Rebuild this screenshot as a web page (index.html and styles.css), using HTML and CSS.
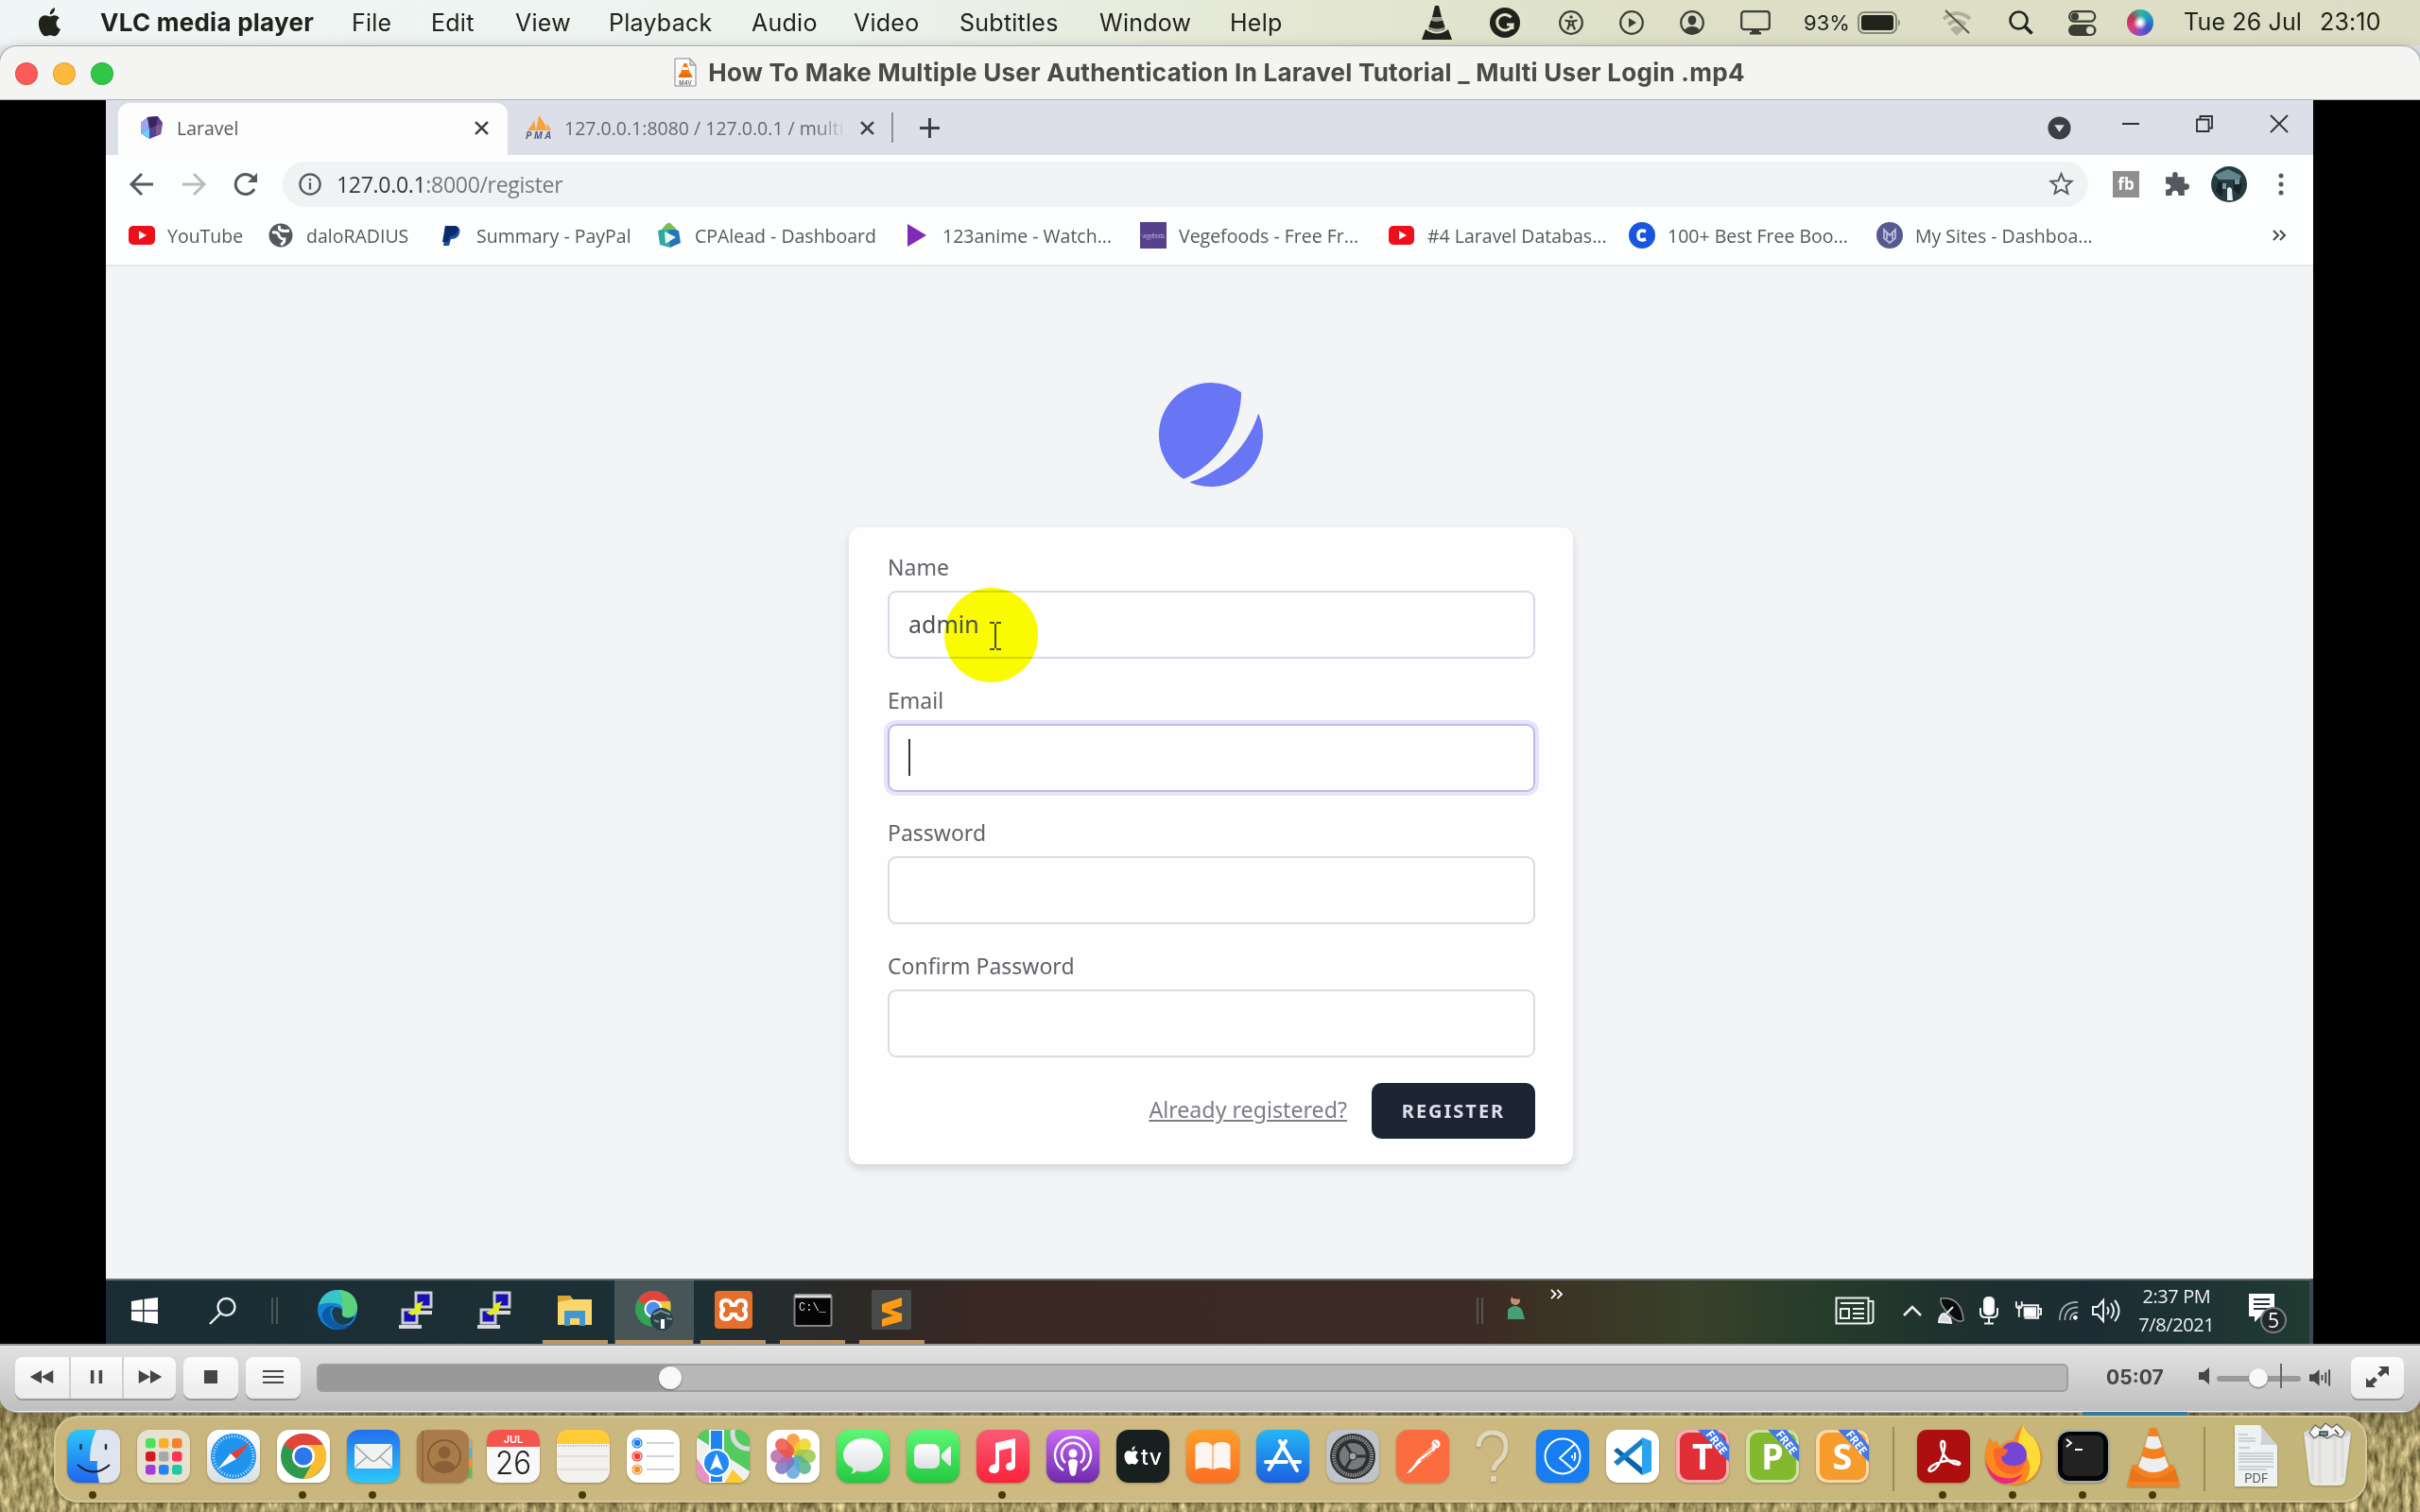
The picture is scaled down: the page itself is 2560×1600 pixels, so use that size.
FILE: index.html
```html
<!DOCTYPE html>
<html lang="en">
<head>
<meta charset="utf-8">
<title>VLC media player</title>
<link rel="stylesheet" href="styles.css">
</head>
<body>
<div class="desktop">
<svg class="grass" width="2560" height="1600" aria-hidden="true">
  <filter id="straw" x="0" y="0" width="100%" height="100%" color-interpolation-filters="sRGB"><feTurbulence type="fractalNoise" baseFrequency="0.16 0.06" numOctaves="4" seed="4"/><feColorMatrix values="0.85 0 0 0 0.23  0.8 0 0 0 0.2  0.68 0 0 0 0.06  0 0 0 0 1"/></filter>
  <rect y="1400" width="2560" height="200" filter="url(#straw)"/>
</svg>

<header class="menubar">
  <svg class="apple" viewBox="0 0 24 30" width="25" height="31"><path d="M17 8c-2 0-3.200 1.200-4.600 1.200S9.500 8 7.600 8C4 8 .8 11 .8 16.500.800 22 4.500 29.300 7.800 29.300c1.600 0 2.600-1.100 4.700-1.100s2.900 1.100 4.600 1.100c2.600 0 4.900-4.200 5.900-7-2.800-1.200-4.200-3.400-4.200-6 0-2.400 1.200-4.300 3.200-5.600C20.600 8.900 18.800 8 17 8zM12.300 7.200C12.100 4 14.300.8 17.300.2c.4 3.300-2 6.700-5 7z"/></svg>
  <nav class="menus"><b>VLC media player</b><span>File</span><span>Edit</span><span>View</span><span>Playback</span><span>Audio</span><span>Video</span><span>Subtitles</span><span>Window</span><span>Help</span></nav>
  <div class="status">
    <svg viewBox="0 0 32 36" width="32" height="36"><path d="M14 0h4l3 12H11zM9.500 17h13l2 8q-8 4-17 0zM4 25l3 2q9 5 18 0l3-2 4 11H0z" fill="#20221c"/><path d="M11 12h10l2 7q-7 3-14 0zM7 21l3-3q6 3 12 0l3 5q-4 5-9 5t-9-5z" fill="#9a9c88"/><path d="M9.800 15.500q6 3 12.400 0l2.200 7q-8 4-16.800 0z" fill="#20221c"/></svg>
    <svg viewBox="0 0 32 32" width="32" height="32"><circle cx="16" cy="16" r="16" fill="#20221c"/><path d="M22.500 10.500A8.300 8.300 0 1 0 24 18h-6M24 18v5" fill="none" stroke="#e0e1ca" stroke-width="3"/></svg>
    <svg class="line" viewBox="0 0 26 26" width="26" height="26"><circle cx="13" cy="13" r="11.800"/><circle cx="13" cy="7" r="1.800" fill="#3c3d34" stroke="none"/><path d="M6.500 10.500l4.500 1v4l-2 5M19.500 10.500l-4.500 1v4l2 5M11 11.500h4M11 15.500h4"/></svg>
    <svg class="line" viewBox="0 0 26 26" width="26" height="26"><circle cx="13" cy="13" r="11.800"/><path d="M10 8l8 5-8 5z" fill="#3c3d34" stroke="none"/></svg>
    <svg class="line" viewBox="0 0 26 26" width="26" height="26"><circle cx="13" cy="13" r="11.800"/><path d="M13 5.500c2.800 0 4.300 2 4.300 4.700S15.600 15.500 13 15.500s-4.300-2.600-4.300-5.300S10.200 5.500 13 5.500zM5 21q2-4 8-4t8 4l-3 3H8z" fill="#3c3d34" stroke="none"/></svg>
    <svg class="line" viewBox="0 0 32 26" width="32" height="26"><rect x="1.200" y="1.200" width="29.600" height="19" rx="3"/><path d="M12 20h8v3h2v2.500H10V23h2z" fill="#3c3d34" stroke="none"/></svg>
    <span class="pct">93%</span>
    <svg viewBox="0 0 52 24" width="52" height="24"><rect x="1" y="1" width="40" height="22" rx="6" fill="none" stroke="#85877a" stroke-width="2"/><rect x="4" y="4" width="34" height="16" rx="3" fill="#20221c"/><path d="M43 8q4 4 0 8z" fill="#85877a"/></svg>
    <svg viewBox="0 0 32 28" width="32" height="28" fill="none" stroke="#aeb09b" stroke-width="4"><path d="M2 10q14-12 28 0M7 16q9-8 18 0M12 21q4-3 8 0l-4 4z"/><path d="M4 1l25 24" stroke="#55564b" stroke-width="2"/></svg>
    <svg viewBox="0 0 26 26" width="26" height="26" fill="none" stroke="#20221c"><circle cx="10.500" cy="10.500" r="9" stroke-width="2.600"/><path d="M17 17l7.500 7.500" stroke-width="3.500"/></svg>
    <svg viewBox="0 0 30 27" width="30" height="27"><rect x="1.200" y="1.200" width="27" height="10.500" rx="5.200" fill="none" stroke="#3c3d34" stroke-width="2.200"/><circle cx="7" cy="6.500" r="4" fill="#3c3d34"/><rect y="15" width="29.500" height="12" rx="6" fill="#3c3d34"/><circle cx="23" cy="21" r="4" fill="#e0e1ca"/></svg>
    <i class="siri"></i>
    <span class="date">Tue 26 Jul</span><span class="date">23:10</span>
  </div>
</header>

<main class="window">
  <div class="titlebar">
    <div class="lights"><i class="red"></i><i class="amber"></i><i class="green"></i></div>
    <div class="title"><svg viewBox="0 0 24 31" width="24" height="31"><path d="M1 1h16l6 7v22H1z" fill="#fafafa" stroke="#888"/><path d="M17 1v7h6z" fill="#ddd" stroke="#888"/><path d="M10.500 6h3l4 12h-11z" fill="#f07a12"/><path d="M9.500 10h5l1 3h-7z" fill="#fff"/><path d="M6 17h12l1.500 4h-15z" fill="#e96d0b"/><text x="12" y="28.500" font-size="6" text-anchor="middle" fill="#333">M4V</text></svg><b>How To Make Multiple User Authentication In Laravel Tutorial _ Multi User Login .mp4</b></div>
  </div>

  <section class="stage">
   <div class="video">
    <div class="tabs">
      <div class="tab active"><svg viewBox="0 0 26 26" width="26" height="26"><path d="M9 2l11-1 5 7-2 12-12 5-9-6V8z" fill="#56409a"/><path d="M9 2l2 12-9 5V8z" fill="#9aa6ee"/><path d="M9 2l11-1-2 10-7 3z" fill="#3b2557"/><path d="M11 14l-9 5 9 6z" fill="#68d4f5"/><path d="M18 11l7-3-2 12-5 2z" fill="#7e5a91"/></svg><span>Laravel</span><svg class="x" viewBox="0 0 14 14" width="15" height="15"><path d="M1 1l12 12M13 1L1 13"/></svg></div>
      <div class="tab second"><svg viewBox="0 0 28 26" width="28" height="26"><path d="M2 16q5-5 7-11l2 11zM11 16L14 0q7 9 9 16zM22 8l5 8h-4z" fill="#f7a23b"/><text x="0" y="25" font-size="10.500" font-weight="bold" font-style="italic" fill="#5a5a86" textLength="27">PMA</text></svg><span>127.0.0.1:8080 / 127.0.0.1 / multi</span><svg class="x" viewBox="0 0 14 14" width="15" height="15"><path d="M1 1l12 12M13 1L1 13"/></svg></div>
      <svg class="plus" viewBox="0 0 20 20" width="21" height="21"><path d="M10 0v20M0 10h20"/></svg>
      <div class="winbtns">
        <svg viewBox="0 0 26 26" width="25" height="25"><circle cx="13" cy="13" r="12.500" fill="#3b3e43"/><path d="M7.500 9.500h11L13 17.500z" fill="#dcdfe6"/></svg>
        <svg viewBox="0 0 18 18" width="18" height="18"><path d="M0 9h18"/></svg>
        <svg viewBox="0 0 18 18" width="18" height="18"><path d="M1 4.500h12.500V17H1zM4.500 4V1H17v12.500h-3"/></svg>
        <svg viewBox="0 0 18 18" width="18" height="18"><path d="M0 0l18 18M18 0L0 18"/></svg>
      </div>
    </div>
    <div class="toolbar">
      <svg class="nav" viewBox="0 0 26 26" width="26" height="26"><path d="M25 13H3M13 2L2 13l11 11"/></svg>
      <svg class="nav dim" viewBox="0 0 26 26" width="26" height="26"><path d="M1 13h22M13 2l11 11-11 11"/></svg>
      <svg class="nav" viewBox="0 0 26 26" width="26" height="26"><path d="M22 18a10.500 10.500 0 1 1 0-10"/><path d="M25 1v10H15z" fill="#55585c" stroke="none"/></svg>
      <div class="omni"><svg viewBox="0 0 26 26" width="24" height="24" fill="none" stroke="#55585c" stroke-width="2.500"><circle cx="13" cy="13" r="11.500"/><path d="M13 11v8M13 6.500v2.500"/></svg><span><em>127.0.0.1</em>:8000/register</span><svg class="star" viewBox="0 0 26 26" width="25" height="25"><path d="M13 2l3.200 7.600 8.300.6-6.300 5.400 2 8.100L13 19.300l-7.200 4.400 2-8.100-6.300-5.400 8.300-.6z"/></svg></div>
      <div class="ext"><svg viewBox="0 0 28 28" width="28" height="28"><rect width="28" height="28" fill="#8f8f8f"/><text x="14" y="20" font-size="17" font-weight="bold" text-anchor="middle" fill="#fff">fb</text></svg>
      <svg viewBox="0 0 26 26" width="27" height="27"><path d="M2 6h7q-1-5 2.500-5T14 6h7v7q5-1 5 3t-5 3v6h-6q0-5-3.500-5T8 25H2v-6q5 0 5-3t-5-3z" fill="#55585c"/></svg>
      <svg viewBox="0 0 38 38" width="38" height="38"><circle cx="19" cy="19" r="19" fill="#263c40"/><path d="M4 9l14-6 14 7-2 4H8z" fill="#60858e"/><path d="M8 15l6 4-3 13-6-6zM24 15l9 3-3 12-6-5z" fill="#182226"/><path d="M17 24q2-4 5 0l1 12h-6z" fill="#e8eef4"/><path d="M12 18h4v6h-4zM25 14h5v5h-5z" fill="#7897a6"/></svg>
      <svg viewBox="0 0 6 24" width="6" height="24" fill="#55585c"><circle cx="3" cy="3" r="2.500"/><circle cx="3" cy="12" r="2.500"/><circle cx="3" cy="21" r="2.500"/></svg></div>
    </div>
    <div class="bookmarks">
      <a><svg viewBox="0 0 28 28"><rect y="4" width="28" height="20" rx="5" fill="#ee0f1b"/><path d="M11 9.500l8 4.500-8 4.500z" fill="#fff"/></svg>YouTube</a>
      <a><svg viewBox="0 0 28 28"><circle cx="14" cy="14" r="12.500" fill="#55585c"/><path d="M5 11q6-1 7 3t6 4q0 4-4 6M13 4q-2 4 2 5t8 0" fill="none" stroke="#fff" stroke-width="3"/></svg>daloRADIUS</a>
      <a><svg viewBox="0 0 28 28"><path d="M8 4h10q7 1 5 8-2 6-9 6l-2 7H6z" fill="#1d4f9f"/><path d="M8 4h10q5 1 3 6-2 5-8 5l-2 6H5z" fill="#0b2a68"/></svg>Summary - PayPal</a>
      <a><svg viewBox="0 0 28 28"><path d="M2 9l12-3 1 21-11-3z" fill="#30a8a8"/><path d="M13 6l11 3 2 13-11 5z" fill="#2475b8"/><path d="M9 10l12 6-11 7z" fill="#e8f7ee"/><path d="M6 8q6-9 9-7l7 7z" fill="#79be50"/></svg>CPAlead - Dashboard</a>
      <a><svg viewBox="0 0 28 28"><path d="M4 2l20 12L4 26z" fill="#8129b8"/></svg>123anime - Watch...</a>
      <a><svg viewBox="0 0 28 28"><rect width="28" height="28" fill="#56428b"/><text x="2" y="17" font-size="7" textLength="24" fill="#b0a2cf">vegefoods</text></svg>Vegefoods - Free Fr...</a>
      <a><svg viewBox="0 0 28 28"><rect y="4" width="27" height="20" rx="5" fill="#ee0f1b"/><path d="M11 9.500l8 4.500-8 4.500z" fill="#fff"/></svg>#4 Laravel Databas...</a>
      <a><svg viewBox="0 0 28 28"><circle cx="14" cy="14" r="14" fill="#1856e0"/><path d="M18 10q-8-3-8 4t8 4" fill="none" stroke="#fff" stroke-width="3.500"/></svg>100+ Best Free Boo...</a>
      <a><svg viewBox="0 0 28 28"><circle cx="14" cy="14" r="14" fill="#575a91"/><path d="M8 8v9l6 5 6-5V8l-6 6zM11 11v7M17 11v7" fill="none" stroke="#b7bce0" stroke-width="1.800"/></svg>My Sites - Dashboa...</a>
      <svg class="more" viewBox="0 0 14 12" width="14" height="12"><path d="M1 1l5 5-5 5M8 1l5 5-5 5"/></svg>
    </div>
    <div class="page">
      <svg class="logo" viewBox="0 0 48 48" width="110" height="110"><path d="M11.395 44.428C4.557 40.198 0 32.632 0 24 0 10.745 10.745 0 24 0a23.891 23.891 0 0113.997 4.502c-.2 17.907-11.097 33.245-26.602 39.926z"/><path d="M14.134 45.885A23.914 23.914 0 0024 48c13.255 0 24-10.745 24-24 0-3.516-.756-6.856-2.115-9.866-4.659 15.143-16.608 27.092-31.750 31.751z"/></svg>
      <form class="card">
        <label>Name</label><div class="field name"><span class="halo"></span><span class="typed">admin</span><svg class="ibeam" viewBox="0 0 14 30" width="14" height="30"><path d="M1 1h5M8 1h5M7 2v26M1 29h5M8 29h5"/></svg></div>
        <label>Email</label><div class="field focus"><i class="caret"></i></div>
        <label>Password</label><div class="field"></div>
        <label>Confirm Password</label><div class="field"></div>
        <div class="actions"><a>Already registered?</a><span class="btn">REGISTER</span></div>
      </form>
    </div>
    <div class="taskbar">
      <div class="t-left">
        <svg viewBox="0 0 28 28" width="28" height="28" fill="#fff"><path d="M0 4l12-2v11.300H0zM13.500 1.700L28 0v13.300H13.500zM0 14.800h12V26L0 24zM13.500 14.800H28V28l-14.500-1.800z"/></svg>
        <svg viewBox="0 0 30 30" width="30" height="30" fill="none" stroke="#e8eef0" stroke-width="2.400"><circle cx="18.500" cy="11" r="9"/><path d="M12 18L1 29"/></svg>
        <i class="grip"></i>
      </div>
      <div class="t-apps">
        <div><svg viewBox="0 0 42 42"><circle cx="21" cy="21" r="21" fill="#1583d3"/><path d="M1 16Q6 0 22 0q18 1 20 18 0 10-9 11-9 0-7-5 2-9-8-10Q8 13 1 16z" fill="#38c4c9"/><path d="M22 0q18 1 20 18 0 10-9 11-9 0-7-5 2-6-1-8 3-9-3-16z" fill="#5bd37c"/><path d="M13 24q4 16 22 13-14 11-27-2-7-8 0-15 5-4 10-3-5 2-5 7z" fill="#0d5aa8"/><path d="M15 24q1-4 3-6 9 0 8 6-2 5 7 6l6-2q-4 9-13 9-9-1-11-13z" fill="#1c3b44"/></svg></div>
        <div><svg viewBox="0 0 42 42"><g stroke="#c9ccd4" stroke-width="3" fill="#1711b4"><path d="M20 3h16v15H20zM6 21h15v14H6z"/></g><path d="M16 22h21v4H16zM2 37h24v4H2z" fill="#d8dade"/><path d="M11 24l8-4v-5l9-3-3 6v5l-9 4z" fill="#e4ee19"/></svg></div>
        <div><svg viewBox="0 0 42 42"><g stroke="#c9ccd4" stroke-width="3" fill="#1711b4"><path d="M20 3h16v15H20zM6 21h15v14H6z"/></g><path d="M16 22h21v4H16zM2 37h24v4H2z" fill="#d8dade"/><path d="M11 24l8-4v-5l9-3-3 6v5l-9 4z" fill="#e4ee19"/></svg></div>
        <div class="run"><svg viewBox="0 0 42 42"><path d="M3 6h13l3 4h20v27H3z" fill="#fbd66c"/><path d="M3 6h13l2 4-15 3z" fill="#dba334"/><path d="M10 38V22h22v16h-6v-8H16v8z" fill="#3f98d4"/></svg></div>
        <div class="run on"><svg viewBox="0 0 42 42"><circle cx="20" cy="20" r="19" fill="#33a355"/><path d="M20 20L3.500 11A19 19 0 0 1 38 13z" fill="#df463d"/><path d="M20 12h18q3 14-12 26l-6-10z" fill="#f8c63a"/><circle cx="20" cy="20" r="8.500" fill="#4f8fee" stroke="#fff" stroke-width="2"/><circle cx="29" cy="31" r="12" fill="#2b414a"/><path d="M28 31h4v10h-4z" fill="#fff"/><path d="M20 26l8-4 10 4M21 32l5 2M34 30l6 1" stroke="#759098" stroke-width="2" fill="none"/></svg></div>
        <div class="run"><svg viewBox="0 0 42 42"><rect x="1" y="1" width="40" height="40" rx="4" fill="#e5702b"/><path d="M13 11q5 0 6 5h4q1-5 6-5t5 5-4 5q4 0 4 5t-5 5-6-5h-4q-1 5-6 5t-5-5 4-5q-4 0-4-5t5-5z" fill="none" stroke="#fff" stroke-width="4"/></svg></div>
        <div class="run"><svg viewBox="0 0 42 42"><rect x="1.500" y="5" width="39" height="33" rx="2" fill="#050505" stroke="#82868a" stroke-width="2"/><path d="M2 7h38" stroke="#d9dcde" stroke-width="3"/><text x="6" y="22" font-size="12" fill="#ddd" font-family="Liberation Mono">C:\_</text></svg></div>
        <div class="run"><svg viewBox="0 0 42 42"><rect width="42" height="42" rx="2" fill="#494b4a"/><path d="M11 15l21-7v9l-12 4 12 4v8l-21 6v-8l12-4-12-4z" fill="#ff9b14"/></svg></div>
      </div>
      <div class="t-mid"><i class="grip"></i><svg viewBox="0 0 20 26" width="20" height="26"><circle cx="9" cy="6" r="5" fill="#c88f73"/><path d="M6 1q6-3 8 4l-8-1z" fill="#3c2c24"/><path d="M1 26V16q8-8 15 0l3 10z" fill="#45a07a"/></svg><svg class="chev" viewBox="0 0 14 12" width="15" height="11"><path d="M1 1l5 5-5 5M8 1l5 5-5 5"/></svg></div>
      <div class="t-tray">
        <svg viewBox="0 0 42 30" width="42" height="30"><path d="M1.500 1.500h34v27h-34zM36 5h4.500v20q0 3.500-5 3.500M6 7h25M19 13h12M19 18h12M19 23h12M6 13h9v10H6z"/></svg>
        <svg viewBox="0 0 20 12" width="20" height="12"><path d="M1 11l9-9 9 9" stroke-width="2.500"/></svg>
        <svg viewBox="0 0 28 28" width="28" height="28"><path d="M3 1q22-2 24 23-5 4-15-6T3 1z" fill="#0b0c0c" stroke="#8e9390" stroke-width="1.500"/><path d="M1 26q1-9 6-9l6 5 1 5zM9 17l7-7" fill="#d6d9da"/></svg>
        <svg viewBox="0 0 20 30" width="20" height="30"><rect x="5" y="1" width="10" height="18" rx="4" fill="#fff"/><path d="M1 12v5q0 5 5 5h8q5 0 5-5v-5M10 22v6M5 28.500h10"/></svg>
        <svg viewBox="0 0 30 24" width="29" height="24"><path d="M8 6h18v14H11M27 10h2v6h-2M5 6v13M2 2v4q0 3 3 3t3-3V2" /><path d="M11 9h12v9H11z" fill="#fff"/></svg>
        <svg viewBox="0 0 24 24" width="22" height="24" stroke-width="1.800"><path d="M2 23Q2 2 23 2M8 23Q8 8 23 8M14 23q0-9 9-9" stroke="#aab3b5"/><circle cx="20" cy="20" r="2.500" fill="#fff" stroke="none"/></svg>
        <svg viewBox="0 0 30 26" width="30" height="26"><path d="M1 9h5l6-7v22l-6-7H1zM16 9q3 4 0 8M20 5q6 8 0 16M24 2q9 11 0 22"/></svg>
        <div class="clock"><span>2:37 PM</span><span>7/8/2021</span></div>
        <svg class="note" viewBox="0 0 42 44" width="42" height="44"><path d="M1 1h27v24H13l-6 6v-6H1z" fill="#fff" stroke="none"/><path d="M6 7h17M6 12h17M6 17h17" stroke="#24343a"/><circle cx="27" cy="29" r="13" fill="#22292c" stroke="#777e80"/><text x="27" y="37" font-size="21" text-anchor="middle" fill="#fff" stroke="none">5</text></svg>
      </div>
    </div>
   </div>
  </section>

  <footer class="controls">
    <div class="group"><span><svg viewBox="0 0 28 16" width="28" height="14"><path d="M14 0v16L0 8zM28 0v16L14 8z"/></svg></span><span><svg viewBox="0 0 16 16" width="16" height="14"><path d="M1 0h4v16H1zM11 0h4v16h-4z"/></svg></span><span><svg viewBox="0 0 28 16" width="28" height="14"><path d="M0 0l14 8L0 16zM14 0l14 8-14 8z"/></svg></span></div>
    <div class="group one"><span><svg viewBox="0 0 14 14" width="14" height="14"><path d="M0 0h14v14H0z"/></svg></span></div>
    <div class="group one"><span><svg viewBox="0 0 22 14" width="22" height="14"><path d="M0 0h22v2H0zM0 6h22v2H0zM0 12h22v2H0z"/></svg></span></div>
    <div class="seek"><div class="played"></div><i class="knob"></i></div>
    <b class="time">05:07</b>
    <svg class="spk" viewBox="0 0 12 18" width="12" height="18"><path d="M0 5h5l6-5v18l-6-5H0z"/></svg>
    <div class="vol"><i class="knob"></i><i class="tick"></i></div>
    <svg class="spk2" viewBox="0 0 24 20" width="23" height="20"><path d="M0 6h5l6-5v18l-6-5H0zM13 7h2v6h-2zM17 4h2v12h-2zM21 1h2v18h-2z"/></svg>
    <div class="group one fs"><span><svg viewBox="0 0 24 22" width="24" height="22"><path d="M13 0h11v10l-3.500-3.500-5 4.500-3.500-3.500 5-4.500zM0 22V12l3.500 3.500 5-4.500 3.500 3.500-5 4.500L10 22z"/></svg></span></div>
  </footer>
</main>
<i class="peek"></i>

<div class="dock">
  <div class="app dot"><svg viewBox="0 0 56 56"><defs><linearGradient id="fb" x2="0" y2="1"><stop stop-color="#2bc6fb"/><stop offset="1" stop-color="#2065ee"/></linearGradient><linearGradient id="gr" x2="0" y2="1"><stop stop-color="#5df777"/><stop offset="1" stop-color="#25c840"/></linearGradient><linearGradient id="pk" x2="0" y2="1"><stop stop-color="#fb5b74"/><stop offset="1" stop-color="#fa233b"/></linearGradient><linearGradient id="pu" x2="0" y2="1"><stop stop-color="#c66af5"/><stop offset="1" stop-color="#6f2aad"/></linearGradient><linearGradient id="or" x2="0" y2="1"><stop stop-color="#ff9f2a"/><stop offset="1" stop-color="#fb6f24"/></linearGradient><linearGradient id="bl" x2="0" y2="1"><stop stop-color="#24b6f6"/><stop offset="1" stop-color="#1b5fe0"/></linearGradient><linearGradient id="ml" x2="0" y2="1"><stop stop-color="#2270ee"/><stop offset="1" stop-color="#2bc8fb"/></linearGradient><linearGradient id="wh" x2="0" y2="1"><stop stop-color="#fff"/><stop offset="1" stop-color="#dcdfe2"/></linearGradient><clipPath id="sq"><rect width="56" height="56" rx="13"/></clipPath></defs><g clip-path="url(#sq)"><rect width="56" height="56" fill="url(#fb)"/><path d="M31 0q-7 14-7 33h8q-1 12 2 23h22V0z" fill="#dfe5ee"/><path d="M14.500 16v4M41 16v4" stroke="#173046" stroke-width="2.500" stroke-linecap="round"/><path d="M11 37q17 15 34 0" fill="none" stroke="#14202c" stroke-width="2"/></g></svg></div>
  <div class="app"><svg viewBox="0 0 56 56"><rect width="56" height="56" rx="13" fill="#e7e2cf"/><g><rect x="9" y="9" width="10.500" height="10.500" rx="3" fill="#4be257"/><rect x="23" y="9" width="10.500" height="10.500" rx="3" fill="#fbb02d"/><rect x="37" y="9" width="10.500" height="10.500" rx="3" fill="#f5822a"/><rect x="9" y="23" width="10.500" height="10.500" rx="3" fill="#d51b22"/><rect x="23" y="23" width="10.500" height="10.500" rx="3" fill="#a4a9ab"/><rect x="37" y="23" width="10.500" height="10.500" rx="3" fill="#fb3559"/><rect x="9" y="37" width="10.500" height="10.500" rx="3" fill="#a43cdc"/><rect x="23" y="37" width="10.500" height="10.500" rx="3" fill="#2a83f4"/><rect x="37" y="37" width="10.500" height="10.500" rx="3" fill="#25c4a5"/></g></svg></div>
  <div class="app"><svg viewBox="0 0 56 56"><rect width="56" height="56" rx="13" fill="url(#wh)"/><circle cx="28" cy="28" r="24" fill="#2093ee"/><circle cx="28" cy="28" r="21" fill="none" stroke="#bfe4fb" stroke-width="3" stroke-dasharray="1 2"/><path d="M45 14L31 31l-6-6z" fill="#f13a2f"/><path d="M11 42l14-17 6 6z" fill="#f8f8f8"/></svg></div>
  <div class="app dot"><svg viewBox="0 0 56 56"><rect width="56" height="56" rx="13" fill="#fff"/><circle cx="28" cy="28" r="24" fill="#2f9a4b"/><path d="M28 28L7.200 16A24 24 0 0 1 48.800 16z" fill="#e2443a"/><path d="M28 16h20.800q10 18-8 32-6 4-12.800 4l10-18z" fill="#fbbd2d"/><circle cx="28" cy="28" r="12" fill="#fff"/><circle cx="28" cy="28" r="9.500" fill="#2e77e8"/></svg></div>
  <div class="app dot"><svg viewBox="0 0 56 56"><rect width="56" height="56" rx="13" fill="url(#ml)"/><rect x="8" y="15" width="40" height="26" rx="3" fill="#f1f2f2"/><path d="M9 17l16 15q3 2.500 6 0l16-15M9 39l13-11M47 39L34 28" fill="none" stroke="#9ba4a9" stroke-width="1.500"/></svg></div>
  <div class="app"><svg viewBox="0 0 56 56"><path d="M52 10h6v9h-6z" fill="#a9a9a4"/><path d="M52 19h6v10h-6z" fill="#4cb0e8"/><path d="M52 29h6v11h-6z" fill="#f58e2c"/><path d="M52 40h6v10h-6z" fill="#54c351"/><rect width="55" height="56" rx="12" fill="#a97c49"/><path d="M6 1v54" stroke="#8d6339" stroke-width="1.500"/><circle cx="29" cy="28" r="17" fill="none" stroke="#7d5730" stroke-width="1.500"/><circle cx="29" cy="24" r="6.500" fill="#8a6137"/><path d="M17 40q3-7 12-7t12 7q-12 9-24 0z" fill="#8a6137"/></svg></div>
  <div class="app"><svg viewBox="0 0 56 56"><rect width="56" height="56" rx="13" fill="#f8f8f8"/><path d="M0 18v-5Q0 0 13 0h30q13 0 13 13v5z" fill="#f5544f"/><text x="28" y="13.500" text-anchor="middle" font-size="11" font-weight="600" fill="#fff">JUL</text><text x="9" y="47" font-size="34" font-weight="300" textLength="38" lengthAdjust="spacingAndGlyphs" fill="#222">26</text></svg></div>
  <div class="app dot"><svg viewBox="0 0 56 56"><rect width="56" height="56" rx="13" fill="#f3f2ee"/><path d="M0 15v-2Q0 0 13 0h30q13 0 13 13v2z" fill="#fdcc37"/><path d="M2 17h53" stroke="#aaa69c" stroke-width="1.500" stroke-dasharray="1 1.500"/><path d="M1 28h54M1 42h54" stroke="#cfcdc7"/></svg></div>
  <div class="app"><svg viewBox="0 0 56 56"><rect width="56" height="56" rx="13" fill="#fff"/><g stroke="#c4c5c7" stroke-width="1.500"><path d="M21 14h29M21 28h29M21 42h29"/></g><g stroke-width="1.200"><circle cx="11" cy="14" r="4" fill="#1a7bf0" stroke="#fff"/><circle cx="11" cy="14" r="5" fill="none" stroke="#1a7bf0"/><circle cx="11" cy="28" r="4" fill="#ee3b35" stroke="#fff"/><circle cx="11" cy="28" r="5" fill="none" stroke="#ee3b35"/><circle cx="11" cy="42" r="4" fill="#f5912c" stroke="#fff"/><circle cx="11" cy="42" r="5" fill="none" stroke="#f5912c"/></g></svg></div>
  <div class="app"><svg viewBox="0 0 56 56"><g clip-path="url(#sq)"><rect width="56" height="56" fill="#54cb5f"/><path d="M0 8l56 36v12H0z" fill="#eef0f1"/><path d="M0 30l18 26H0z" fill="#e78fc6"/><path d="M38 42l14 14H30z" fill="#fccc2f"/><path d="M14 0h14v56H14z" fill="#1f83f2" stroke="#fff" stroke-width="2"/><circle cx="54" cy="4" r="16" fill="none" stroke="#d8dadc" stroke-width="5"/><circle cx="21" cy="35" r="14" fill="#2189f5" stroke="#fff" stroke-width="2"/><path d="M21 25l7 18-7-4-7 4z" fill="#fff"/></g></svg></div>
  <div class="app"><svg viewBox="0 0 56 56"><rect width="56" height="56" rx="13" fill="#fff"/><g fill-opacity=".85"><rect x="21" y="4" width="14" height="23" rx="7" fill="#f7922d"/><rect x="21" y="4" width="14" height="23" rx="7" fill="#ecd529" transform="rotate(45 28 28)"/><rect x="21" y="4" width="14" height="23" rx="7" fill="#9bc74a" transform="rotate(90 28 28)"/><rect x="21" y="4" width="14" height="23" rx="7" fill="#57b28c" transform="rotate(135 28 28)"/><rect x="21" y="4" width="14" height="23" rx="7" fill="#61a7dc" transform="rotate(180 28 28)"/><rect x="21" y="4" width="14" height="23" rx="7" fill="#7a74bd" transform="rotate(225 28 28)"/><rect x="21" y="4" width="14" height="23" rx="7" fill="#b967a6" transform="rotate(270 28 28)"/><rect x="21" y="4" width="14" height="23" rx="7" fill="#ec5345" transform="rotate(315 28 28)"/></g></svg></div>
  <div class="app"><svg viewBox="0 0 56 56"><rect width="56" height="56" rx="13" fill="url(#gr)"/><path d="M28 9c12 0 21 8 21 18s-9 17.500-21 17.500q-3 0-6-1-3 3-7 3 3-3 2-6-10-5-10-13.500C7 17 16 9 28 9z" fill="url(#wh)"/></svg></div>
  <div class="app"><svg viewBox="0 0 56 56"><rect width="56" height="56" rx="13" fill="url(#gr)"/><rect x="8" y="15" width="27" height="26" rx="7" fill="url(#wh)"/><path d="M37 26l8-8q2-1 2 1v18q0 2-2 1l-8-8z" fill="url(#wh)"/></svg></div>
  <div class="app dot"><svg viewBox="0 0 56 56"><rect width="56" height="56" rx="13" fill="url(#pk)"/><path d="M20 14l21-5v29q0 4-5 5-5 0-5-4t6-5V19l-13 3v19q0 5-6 5-7-1-4-7 2-2 6-3z" fill="#fff"/></svg></div>
  <div class="app"><svg viewBox="0 0 56 56"><rect width="56" height="56" rx="13" fill="url(#pu)"/><g fill="none" stroke="#fff" stroke-width="2.500"><path d="M18 43a19 19 0 1 1 20 0M20 35a12 12 0 1 1 16 0"/></g><circle cx="28" cy="25" r="4.500" fill="#fff"/><path d="M23 35q0-4 5-4t5 4l-2 12q-3 4-6 0z" fill="#fff"/></svg></div>
  <div class="app"><svg viewBox="0 0 56 56"><rect width="56" height="56" rx="13" fill="#17201f"/><path transform="translate(8 17) scale(.67)" d="M17 8c-2 0-3.200 1.200-4.600 1.200S9.500 8 7.600 8C4 8 .8 11 .8 16.500.800 22 4.500 29.300 7.800 29.300c1.600 0 2.600-1.100 4.700-1.100s2.900 1.100 4.600 1.100c2.600 0 4.900-4.200 5.900-7-2.800-1.200-4.200-3.400-4.200-6 0-2.400 1.200-4.300 3.200-5.600C20.600 8.900 18.800 8 17 8zM12.300 7.200C12.100 4 14.300.8 17.300.2c.4 3.300-2 6.700-5 7z" fill="#fff"/><text x="26" y="36.500" font-size="23" font-weight="500" textLength="22" fill="#fff">tv</text></svg></div>
  <div class="app"><svg viewBox="0 0 56 56"><rect width="56" height="56" rx="13" fill="url(#or)"/><path d="M27.500 17q-2-4-9-4t-9 4v25q9-4 18 0zM28.500 17q2-4 9-4t9 4v25q-9-4-18 0z" fill="#fbf6f2"/></svg></div>
  <div class="app"><svg viewBox="0 0 56 56"><rect width="56" height="56" rx="13" fill="url(#bl)"/><g stroke="#fff" stroke-width="4" stroke-linecap="round"><path d="M31 12L16 38M25 12l18 31M10 34h22M39 34h7M13.500 42l1-1.500"/></g></svg></div>
  <div class="app"><svg viewBox="0 0 56 56"><rect width="56" height="56" rx="13" fill="#bfc5cb"/><circle cx="28" cy="28" r="24" fill="#303234"/><circle cx="28" cy="28" r="20" fill="none" stroke="#8c8e90" stroke-width="4" stroke-dasharray="1.500 1"/><circle cx="28" cy="28" r="15" fill="#777a7c" stroke="#2a2c2e" stroke-width="2"/><g stroke="#2f3133" stroke-width="3"><path d="M28 28h17M28 28l-9-15M28 28l-9 15"/></g><circle cx="28" cy="28" r="4" fill="#a1a3a5" stroke="#2f3133"/></svg></div>
  <div class="app"><svg viewBox="0 0 56 56"><rect width="56" height="56" rx="13" fill="#fb6c3e"/><circle cx="42" cy="15" r="4.500" fill="#fff"/><path d="M38 18L24 29l-5 8-8 9 4-1 9-9 6-5 7-5 5-6z" fill="#fff"/><path d="M22 31l16-11M26 33l13-10M40 12l4 5" stroke="#fb6c3e" stroke-width="1.200"/></svg></div>
  <div class="app"><svg viewBox="0 0 56 56"><path d="M13 18Q14 3 28 3t14 15q0 9-7 15-6 5-6 10" fill="none" stroke="#ded7bd" stroke-width="5"/><path d="M26 49h6v6h-6z" fill="#ded7bd"/></svg></div>
  <div class="app"><svg viewBox="0 0 56 56"><rect width="56" height="56" rx="13" fill="#177df0"/><g fill="none" stroke="#fff" stroke-width="2"><circle cx="28" cy="28" r="18.500"/><path d="M41 15L25 30l14 12M41 24q1 5-1 9M38 27v3"/></g></svg></div>
  <div class="app"><svg viewBox="0 0 56 56"><rect width="56" height="56" rx="13" fill="#fff"/><path d="M8 22l4-3 26 21v8z" fill="#0b64a8"/><path d="M8 34l4 4 26-22V9z" fill="#1780cc"/><path d="M38 8l10 4v32l-10 4z" fill="#2ba3f0"/></svg></div>
  <div class="app"><svg viewBox="0 0 56 56"><rect width="56" height="56" rx="12" fill="#f5b1b0"/><rect x="4" y="3" width="49" height="50" rx="9" fill="#e22e36"/><text class="let" x="28" y="42">T</text><path d="M23 0h20l13 17v17z" fill="#4277ea"/><text class="free" transform="translate(31 5) rotate(52)">FREE</text></svg></div>
  <div class="app"><svg viewBox="0 0 56 56"><rect width="56" height="56" rx="12" fill="#cfe2a3"/><rect x="4" y="3" width="49" height="50" rx="9" fill="#82b92f"/><text class="let" x="28" y="42">P</text><path d="M23 0h20l13 17v17z" fill="#4277ea"/><text class="free" transform="translate(31 5) rotate(52)">FREE</text></svg></div>
  <div class="app"><svg viewBox="0 0 56 56"><rect width="56" height="56" rx="12" fill="#fbd9a2"/><rect x="4" y="3" width="49" height="50" rx="9" fill="#f59c2c"/><text class="let" x="28" y="42">S</text><path d="M23 0h20l13 17v17z" fill="#4277ea"/><text class="free" transform="translate(31 5) rotate(52)">FREE</text></svg></div>
  <i class="sep"></i>
  <div class="app dot"><svg viewBox="0 0 56 56"><rect width="56" height="56" rx="10" fill="#ad0f10"/><path d="M27 12q4 0 1 12-5 18-14 20-4-1 2-6 10-6 24-5 8 2 4 4-10-1-16-11-5-13-1-14z" fill="none" stroke="#fff" stroke-width="2.500"/></svg></div>
  <div class="app dot"><svg viewBox="0 0 56 56"><path d="M38-5q4 9 11 13 11 13 8 27-5 22-28 23Q2 56-2 33q0-14 5-25l3 7 4-4 3 8q5-8 15-8 4-10 10-16z" fill="#fb8b1e"/><path d="M38-5q4 9 11 13 9 13 7 27-3 14-16 20 9-12 3-24-8-8-10-20z" fill="#fddc3a"/><path d="M-2 31q3 12 13 18 16 6 27-3-6 12-20 11Q1 54-2 31z" fill="#f0247a"/><circle cx="28" cy="27" r="14" fill="#7546d6"/><path d="M7 20q9-2 15 1-1 6-7 7 1 10 13 10 8 0 12-5-2 14-15 14Q7 46 7 20z" fill="#fb642a"/></svg></div>
  <div class="app dot"><svg viewBox="0 0 56 56"><rect width="55" height="56" rx="13" fill="#9fb0b4"/><rect x="1" y="2" width="53" height="52" rx="12" fill="#050505"/><rect x="6" y="6" width="43" height="43" rx="7" fill="#222"/><path d="M10 10l5 4-5 4M19 21h8" fill="none" stroke="#fff" stroke-width="1.800"/></svg></div>
  <div class="app dot"><svg viewBox="0 0 56 56"><path d="M6 37h43l7 23H0z" fill="#f58221"/><path d="M25-2h6l14 42q-17 13-34 0z" fill="#f5801f"/><path d="M22 7h11l4 11q-9 5-18 0zM16 28q12 6 24 0l4 11q-16 12-32 0z" fill="#eceef0"/><path d="M5 41q22 20 46 0l4 14H2z" fill="#e46a12" opacity=".6"/></svg></div>
  <i class="sep"></i>
  <div class="app doc"><svg viewBox="0 0 56 56"><path d="M5-5h27l18 22v43H5z" fill="#edf2f2"/><path d="M32-5q3 12 0 21h18z" fill="#cdd3d4"/><path d="M9 5h10M9 9h18M9 12h18M9 19h12M9 25h37M9 28h37M9 31h37M9 34h37M9 39h37M9 42h30" stroke="#a8b4b7"/><text x="28" y="56" font-size="13" text-anchor="middle" fill="#555">PDF</text></svg></div>
  <div class="app"><svg viewBox="0 0 56 56"><path d="M3 3h50l-6 50q-1 6-7 6H16q-6 0-7-6z" fill="#e8e8e6"/><path d="M12 7v45M20 8v48M36 8v47M44 7v44" stroke="#dcdcda" stroke-width="3"/><ellipse cx="28" cy="4" rx="25" ry="6" fill="#d6d8d7"/><path d="M9 3l6-8 6 4 5-6 7 5 5-4 9 8-4 6-8-3-7 4-8-4-6 4z" fill="#f4f4f2" stroke="#666" stroke-width="1.200"/><path d="M20 2h8v4h-8zM36 0l4 5" fill="#42b3c4" stroke="#5a3a30" stroke-width="1.500"/></svg></div>
</div>
</div>
</body>
</html>
```

FILE: styles.css
```css
* { box-sizing: border-box; }
body { margin: 0; font-family: Inter, "Liberation Sans", sans-serif; }
svg { display: block; flex: none; overflow: visible; }
i, em { font-style: normal; }

.desktop { position: relative; width: 2560px; height: 1600px; overflow: hidden; background: linear-gradient(90deg, #e8eef0 0 49%, #9b8f52 50% 90%, #dfe3ea 91%); }
.grass { position: absolute; inset: 0; }

.menubar { position: relative; display: flex; height: 48px; padding-left: 40px; align-items: center; color: #20221c; font-size: 25px; white-space: nowrap; background: linear-gradient(90deg, #f0f6f6, #ecf3ee 35%, #e4e7d2 54%, #dddfc6 70%, #dcddc4); }
.apple { fill: #20221c; margin-top: -2px; }
.menus { display: grid; align-items: center; margin: -1px 0 0 41px; grid-template-columns: 266px 84px 89px 99px 151px 108px 112px 148px 138px 79px; letter-spacing: .25px; }
.menus b { font-size: 26px; letter-spacing: .25px; }
.status { display: grid; align-items: center; margin-left: 124px; grid-template-columns: 72px 73px 64px 64px 64px 67px 57px 89px 71px 63px 62px 60px 144px 80px; }
.status .line { fill: none; stroke: #3c3d34; stroke-width: 2.2; }
.pct { font-size: 22px; }
.date { margin-top: -2px; letter-spacing: .15px; }
.siri { width: 28px; height: 28px; border-radius: 50%; background: radial-gradient(circle at 50% 50%, #fff 0 8%, transparent 38%), conic-gradient(#2fb59a, #1f9cc0, #3555c8, #7c4fd0, #e23d78, #bb3456, #2fb59a); }

.window { position: relative; height: 1445px; border-radius: 18px; overflow: hidden; box-shadow: 0 0 0 1px #a6abb3, 0 6px 16px rgba(40, 30, 0, .5); margin-top: 1px; background: #f4f4f2; width: 2560px; display: flex; flex-direction: column; }
.titlebar { position: relative; height: 57px; flex: none; display: flex; align-items: center; justify-content: center; border-bottom: 1px solid #afb4bd; }
.lights { position: absolute; left: 16px; top: 17px; display: flex; gap: 16px; }
.lights i { width: 24px; height: 24px; border-radius: 50%; border: 1px solid rgba(0, 0, 0, .12); }
.red { background: #fc5b57; }
.amber { background: #fdb93c; }
.green { background: #30c648; }
.title { display: flex; align-items: center; gap: 12px; color: #4a4a48; font-size: 26px; white-space: nowrap; margin: -2px 0 0 -1px; }
.title b { letter-spacing: .25px; }

.stage { height: 1316px; flex: none; background: #000; padding: 0 113px 0 112px; }
.video { height: 1316px; display: flex; flex-direction: column; font-family: "Open Sans", sans-serif; background: #f2f4f6; color: #55585c; }
.tabs { height: 58px; flex: none; display: flex; align-items: center; background: #dcdfe7; }
.tab { display: flex; align-items: center; font-size: 19.500px; white-space: nowrap; }
.tab.active { margin: 3px 0 0 13px; width: 412px; height: 55px; padding: 0 20px 3px 22px; background: #fdfdfe; border-radius: 12px 12px 0 0; gap: 14px; }
.active .x { margin-left: auto; }
.tab.second { width: 408px; padding-left: 19px; border-right: 2px solid #8d9096; height: 32px; }
.second span { margin-left: 13px; width: 302px; overflow: hidden; color: #66696f; -webkit-mask-image: linear-gradient(90deg, #000 88%, transparent 99%); mask-image: linear-gradient(90deg, #000 88%, transparent 99%); }
.second .x { margin-left: 11px; }
.x, .plus { stroke: #3d4045; stroke-width: 2.400; }
.plus { margin-left: 28px; stroke-width: 2.800; }
.winbtns { margin-left: auto; display: flex; align-items: center; margin-right: 27px; margin-top: -8px; fill: none; stroke: #2e3034; stroke-width: 1.800; }
.winbtns svg:nth-child(1) { margin: 8px 54px 0 0; stroke: none; }
.winbtns svg:nth-child(2) { margin-right: 60px; }
.winbtns svg:nth-child(3) { margin-right: 61px; }
.toolbar { height: 61px; flex: none; background: #fdfefe; display: flex; align-items: center; padding-left: 25px; gap: 29px; }
.nav { fill: none; stroke: #55585c; stroke-width: 3; }
.nav.dim { stroke: #b9bbbd; }
.omni { margin-left: -3px; width: 1910px; height: 48px; border-radius: 24px; background: #f0f2f4; display: flex; align-items: center; padding: 0 16px 0 17px; font-size: 23px; color: #75787c; }
.omni span { margin-left: 16px; letter-spacing: -.3px; }
.omni em { color: #35383c; }
.star { margin-left: auto; fill: none; stroke: #55585c; stroke-width: 2; }
.ext { display: grid; align-items: center; grid-template-columns: 54px 50px 71px 6px; margin-left: -3px; }
.bookmarks { height: 57px; flex: none; background: #fdfefe; border-bottom: 2px solid #e4e6e8; display: grid; grid-template-columns: 147px 180px 231px 262px 250px 263px 254px 262px 419px 14px; padding: 0 0 7px 24px; align-items: center; font-size: 19.500px; white-space: nowrap; }
.bookmarks a { display: flex; align-items: center; gap: 13px; letter-spacing: 0; }
.bookmarks a svg { width: 28px; height: 28px; }
.more { fill: none; stroke: #44474b; stroke-width: 2; }

.page { flex: 1; display: flex; flex-direction: column; align-items: center; padding-top: 123px; font-family: "Noto Sans", sans-serif; }
.logo { fill: #6875f5; margin-left: 2px; }
.card { width: 766px; height: 674px; margin: 43px 0 0 3px; background: #fefefe; border-radius: 12px; padding: 25px 40px 0 41px; box-shadow: 0 5px 9px rgba(30, 35, 50, .14); }
.card label { display: block; height: 42px; line-height: 34px; font-size: 23px; color: #606368; }
.field { position: relative; height: 72px; margin-bottom: 26.700px; border: 2px solid #d9dce2; border-radius: 9px; }
.field.name { border-color: #d5dbe8; }
.focus { border-color: #bdbbe6; box-shadow: 0 0 0 4px #e5e5fb; }
.halo { position: absolute; left: 58px; top: -5px; width: 99px; height: 100px; border-radius: 50%; background: #fbfb00; mix-blend-mode: multiply; }
.typed { position: absolute; left: 20px; top: 15px; font-size: 25px; line-height: 36px; color: #4c4f55; }
.ibeam { position: absolute; left: 105px; top: 31px; fill: none; stroke: #4f5010; stroke-width: 2; }
.caret { position: absolute; left: 20px; top: 14px; width: 2px; height: 39px; background: #333842; }
.actions { display: flex; justify-content: flex-end; align-items: center; gap: 26px; margin-top: 27px; }
.actions a { font-size: 23.200px; color: #7b7e84; text-decoration: underline; margin-top: -3px; }
.btn { width: 173px; height: 59px; border-radius: 10px; background: #1d2433; color: #dbe0ea; display: flex; align-items: center; justify-content: center; font-size: 20px; font-weight: 700; letter-spacing: 2px; }

.taskbar { height: 69px; flex: none; position: relative; display: flex; align-items: center; padding-bottom: 1px; border-right: 4px solid #3b4c50; border-top: 2px solid #68706f; background: linear-gradient(90deg, #1b2d34, #1c3036 26%, #2c2926 34%, #3a2823 40%, #3c2a24 62%, #3b3424 66%, #38412a 72%, #263c2a 78%, #1f302e 84%, #1c2c34 90%, #203b32); }
.t-left { display: flex; align-items: center; width: 203px; padding-left: 27px; gap: 54px; margin-top: -3px; }
.t-left .grip { margin-left: -18px; }
.grip { width: 7px; height: 28px; border: solid #68716f; border-width: 0 2px; opacity: .6; }
.t-apps { display: grid; grid-template-columns: repeat(8, 83.800px); }
.t-apps div { height: 67px; margin-bottom: -1px; padding-bottom: 5px; display: flex; align-items: center; justify-content: center; background: linear-gradient(#bb9566, #bb9566) 50% 100% / 0 4px no-repeat; }
.t-apps svg { width: 42px; height: 42px; }
.t-apps .run { background-size: 69px 4px; }
.t-apps .on { background-color: #475559; background-size: 82px 4px; }
.t-mid { display: flex; align-items: center; margin-left: 577px; margin-top: -3px; }
.t-mid svg { margin: -8px 0 0 25px; }
.t-mid .chev { margin-top: -35px; fill: none; stroke: #fff; stroke-width: 2; }
.t-tray { display: grid; align-items: center; position: relative; margin: -3px 0 0 287px; grid-template-columns: 72px 37px 44px 37px 46px 36px 48px 117px 42px; fill: none; stroke: #eef2f2; stroke-width: 2; }
.clock { display: flex; flex-direction: column; align-items: center; width: 82px; font-size: 20px; line-height: 30px; color: #eef2f2; letter-spacing: -.4px; white-space: nowrap; }
.note { margin-top: 6px; }

.controls { height: 71px; flex: none; display: flex; align-items: center; padding: 0 17px 2px 16px; border-top: 2px solid #989898; background: linear-gradient(#e3e3e3, #bfbfbf); }
.group { display: flex; height: 44px; background: linear-gradient(#fcfcfc, #ebebeb); border-radius: 8px; box-shadow: 0 2px 0 #989898; margin-right: 8px; fill: #464646; }
.group span { width: 56.700px; display: flex; align-items: center; justify-content: center; padding-bottom: 2px; }
.group span + span { border-left: 2px solid #d0d0d0; }
.group.one span { width: 58px; }
.seek { position: relative; margin-left: 9px; width: 1853px; height: 30px; border-radius: 6px; border: 2px solid #9e9e9e; background: #b7b7b7; }
.played { width: 374px; height: 26px; background: #999; }
.knob { position: absolute; left: 360px; top: 1px; width: 24px; height: 24px; border-radius: 50%; background: #f8f8f8; box-shadow: 0 1px 2px #666; }
.time { width: 60px; margin-left: 40px; font-size: 21px; color: #464646; }
.spk, .spk2 { fill: #464646; }
.spk { margin-left: 38px; margin-top: -3px; }
.vol { position: relative; width: 89px; height: 6px; background: #999; border-radius: 3px; margin: 2px 9px 0 7px; }
.vol .knob { left: 34px; top: -8px; width: 20px; height: 20px; }
.tick { position: absolute; left: 67px; top: -13px; width: 2px; height: 26px; background: #666; }
.group.fs { margin: 0 0 0 auto; }
.group.fs span { width: 56px; }
.peek { position: absolute; left: 2203px; top: 1494px; width: 111px; height: 4px; background: #397a9d; }

.dock { position: absolute; left: 57px; top: 1498px; width: 2447px; height: 92px; border-radius: 26px; border: 2px solid #d3c79a; background: linear-gradient(90deg, #c8b67e, #cfba83 50%, #c3b579); box-shadow: 0 1px 2px rgba(50, 40, 0, .5); display: flex; gap: 18px; padding: 13px 0 0 12px; }
.app { position: relative; width: 56px; height: 56px; flex: none; }
.app svg { width: 56px; height: 56px; filter: drop-shadow(0 1px 1px rgba(60, 40, 0, .35)); }
.app.dot::after { content: ""; position: absolute; left: 23px; top: 65px; width: 8px; height: 8px; border-radius: 50%; background: #4a3a05; }
.app.doc { margin: 0 1px 0 2px; }
.sep { width: 2px; height: 68px; margin: -3px 6px 0 7px; flex: none; background: #9b8b54; }
.let { font: bold 38px "Open Sans", sans-serif; text-anchor: middle; fill: #fff; }
.free { font: bold 12px "Open Sans", sans-serif; fill: #fff; }
```
